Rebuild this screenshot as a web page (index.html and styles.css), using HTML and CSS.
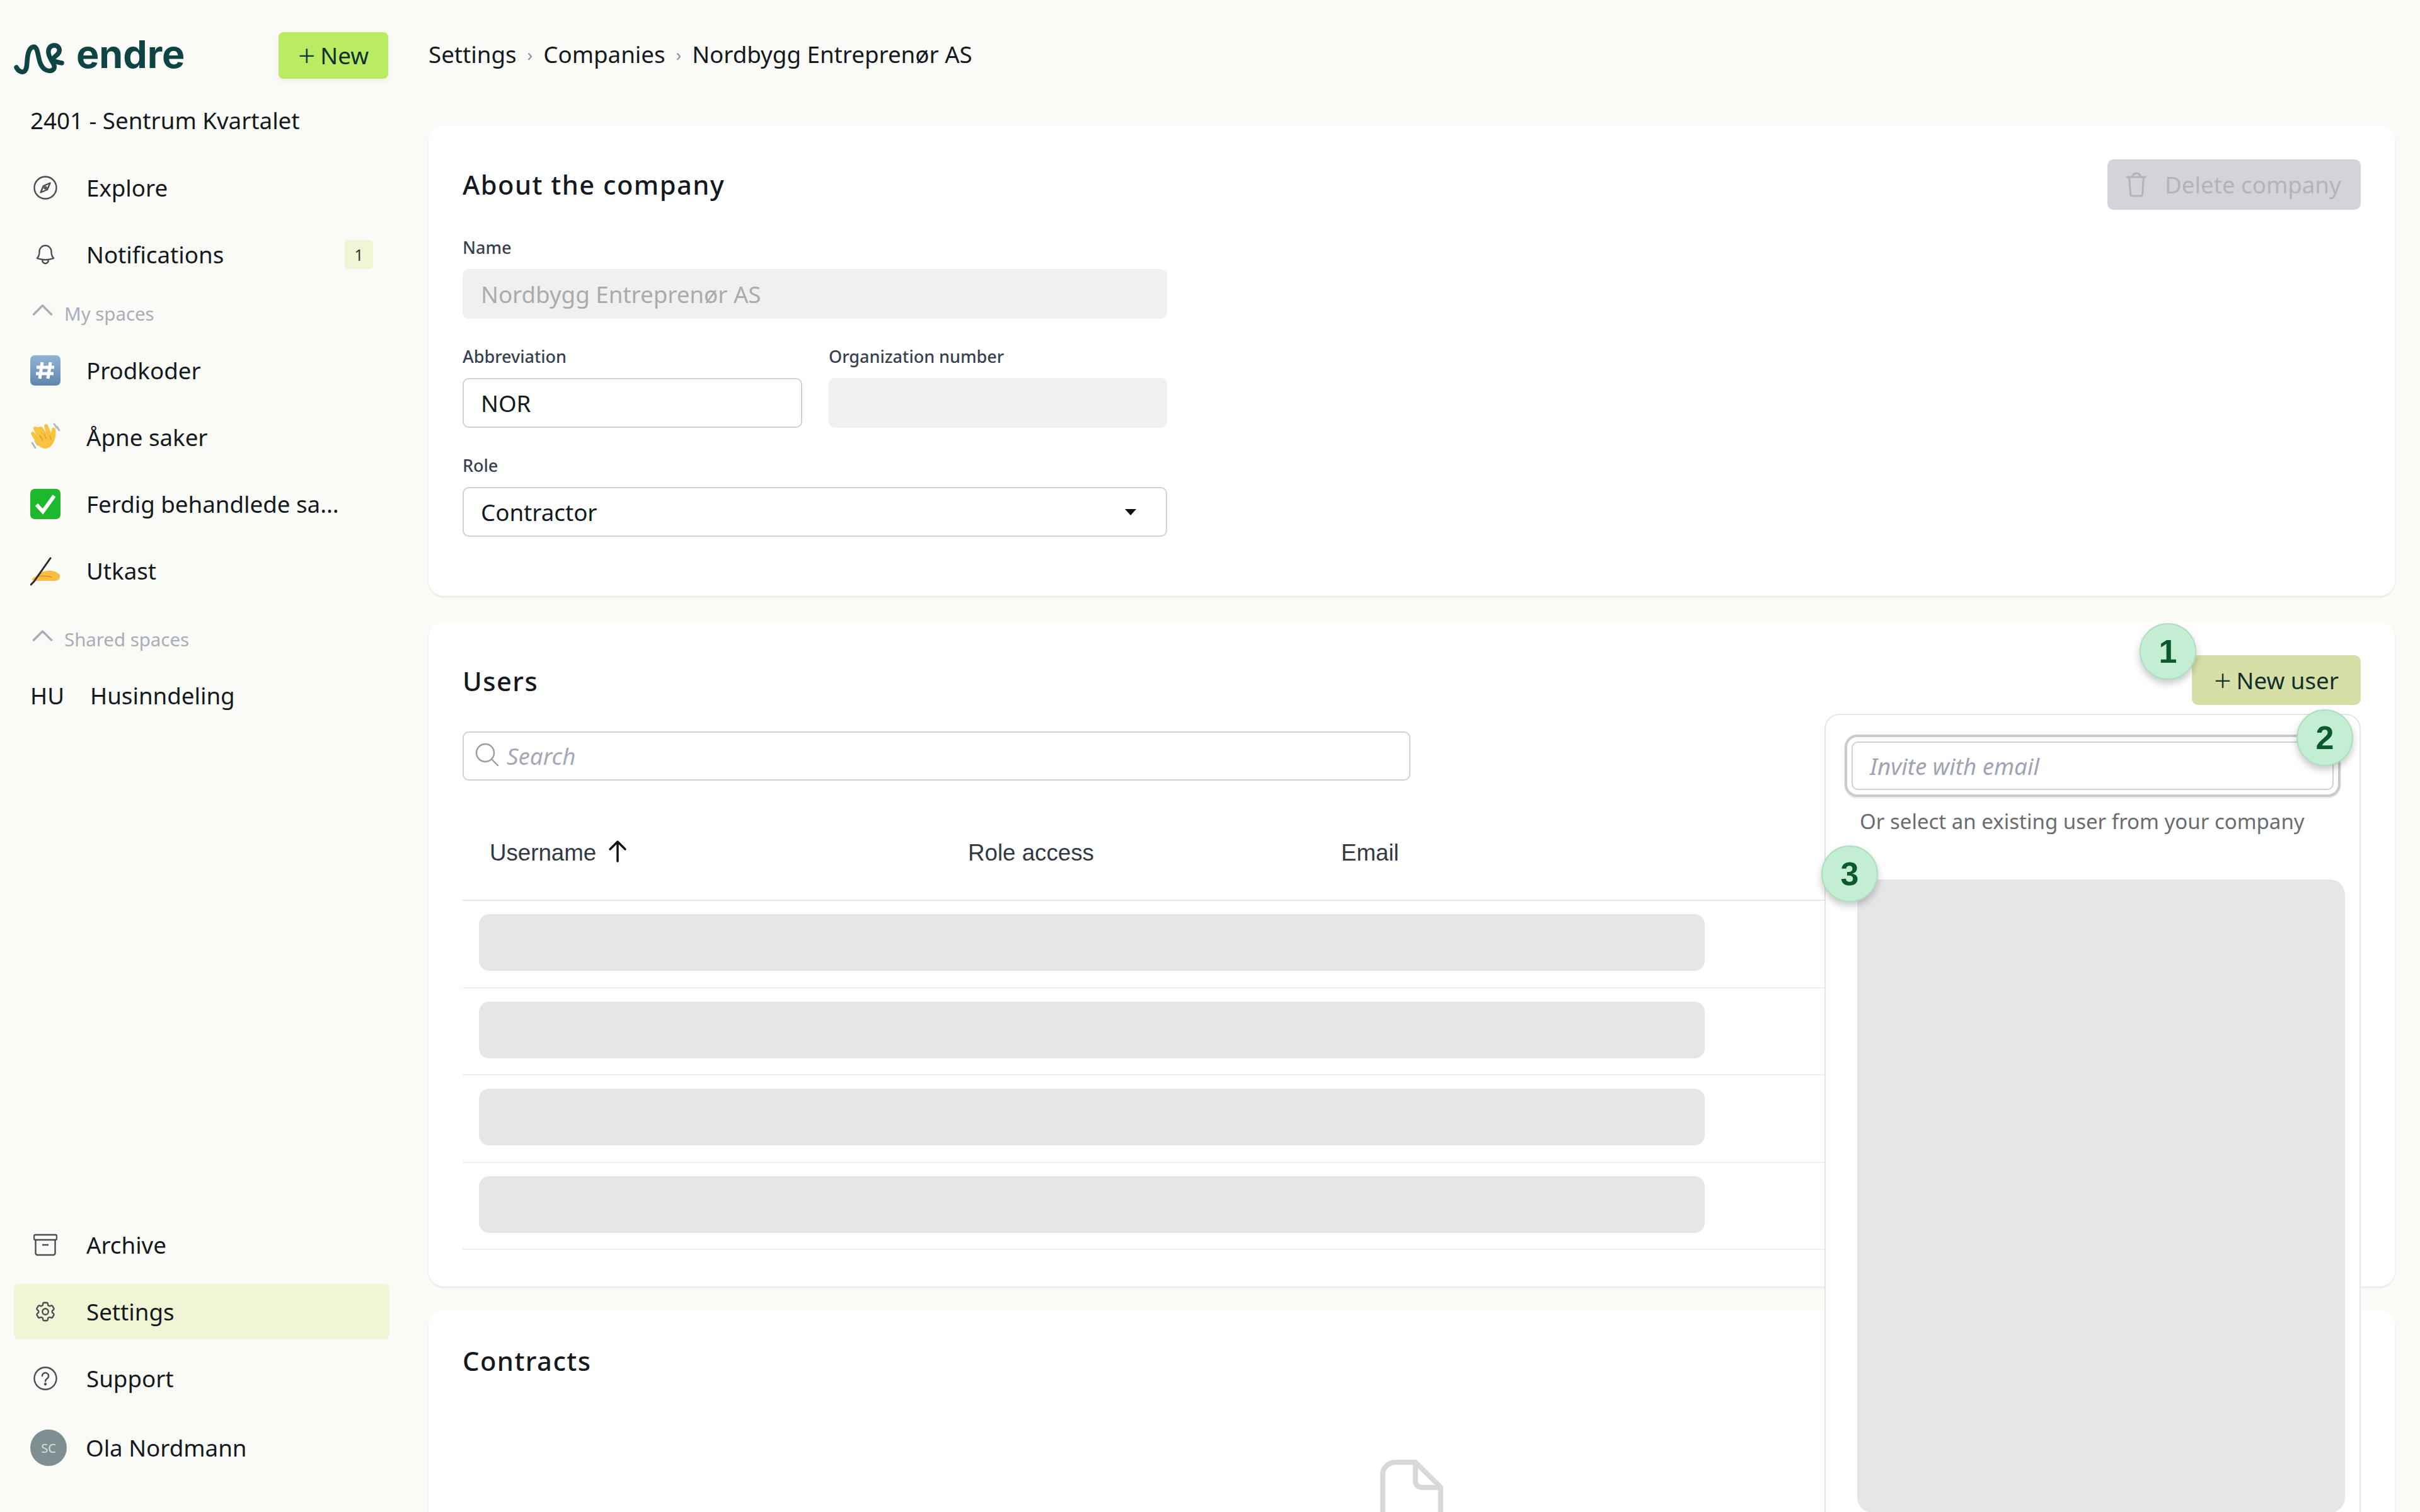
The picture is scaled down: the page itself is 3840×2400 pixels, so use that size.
FILE: index.html
```html
<!DOCTYPE html>
<html lang="en">
<head>
<meta charset="utf-8">
<title>Nordbygg Entreprenør AS</title>
<link rel="stylesheet" href="styles.css">
</head>
<body>
<div class="app">
  <aside class="sidebar">
    <div class="brand-row">
      <div class="brand">
        <svg class="logo" viewBox="0 0 80 56" fill="none" stroke="#0f4444" stroke-width="7.5" stroke-linecap="round" stroke-linejoin="round"><path d="M4 40c3 6 9 9 13 6 6-5 2-20 7-32 3-7 9-9 12-3 4 9 3 25 13 32 6 4 13 3 15-2 2-6-8-14-9-24-1-7 3-12 9-12 7 0 10 6 7 12-3 5-9 7-10 11 3 3 9 4 15 5"/></svg>
        <span class="wordmark">endre</span>
      </div>
      <div class="btn-new"><span class="plus">+</span>New</div>
    </div>
    <div class="project">2401 - Sentrum Kvartalet</div>
    <nav class="nav">
      <div class="nav-item">
        <svg class="nav-icon" viewBox="0 0 38 38" fill="none" stroke="#4a4d52" stroke-width="2.4"><ellipse cx="19" cy="19" rx="17.5" ry="17.5"/><path d="M26.5 11.5 22 22l-10.500 4.500L16 16z" stroke-linejoin="round"/><circle cx="19" cy="19" r="1.500"/></svg>
        <span>Explore</span>
      </div>
      <div class="nav-item">
        <svg class="nav-icon" viewBox="0 0 24 24" fill="none" stroke="#4a4d52" stroke-width="1.500" stroke-linecap="round" stroke-linejoin="round"><path d="M14.857 17.082a23.848 23.848 0 0 0 5.454-1.31A8.967 8.967 0 0 1 18 9.75V9A6 6 0 0 0 6 9v.75a8.967 8.967 0 0 1-2.312 6.022c1.733.64 3.56 1.085 5.455 1.31m5.714 0a24.255 24.255 0 0 1-5.714 0m5.714 0a3 3 0 1 1-5.714 0"/></svg>
        <span>Notifications</span>
        <span class="count">1</span>
      </div>
    </nav>
    <div class="section-head section-my">
      <svg class="chev" viewBox="0 0 32 20" fill="none" stroke="#a9adbb" stroke-width="3.500" stroke-linecap="round" stroke-linejoin="round"><path d="M2 17 16 3l14 14"/></svg>
      <span>My spaces</span>
    </div>
    <div class="nav">
      <div class="nav-item">
        <svg class="emoji" viewBox="0 0 48 48"><defs><linearGradient id="kc" x1="0" y1="0" x2="0" y2="1"><stop offset="0" stop-color="#8fb3d4"/><stop offset="1" stop-color="#5f86ad"/></linearGradient></defs><rect width="48" height="48" rx="7" fill="url(#kc)"/><path d="M19 11l-4 26M32 11l-4 26M10 19h28M9 29h28" stroke="#fff" stroke-width="5" fill="none"/></svg>
        <span>Prodkoder</span>
      </div>
      <div class="nav-item">
        <svg class="emoji" viewBox="0 0 48 48"><path d="M3 33l5 8M8 30l4 6M38 3l4 6M43 8l3 5" stroke="#b9b9b9" stroke-width="3" fill="none" stroke-linecap="round"/><path d="M14 8c2-2 4-1 6 1l5 8-3-11c0-3 4-4 6-1l5 12 1-6c1-3 5-3 6 0 1 7 0 15-3 21-4 8-11 12-18 9-5-2-9-7-12-12l-5-9c-2-3 1-6 4-4l5 6-6-11c-1-3 3-5 5-3z" fill="#f8c43f"/><path d="M22 19l4 8M15 21l5 8M31 21l2 7" stroke="#e59a22" stroke-width="1.500" fill="none"/></svg>
        <span>Åpne saker</span>
      </div>
      <div class="nav-item">
        <svg class="emoji" viewBox="0 0 48 48"><rect width="48" height="48" rx="7" fill="#1eb82c"/><path d="M10 25l10 11 18-25" stroke="#fff" stroke-width="6" fill="none"/></svg>
        <span>Ferdig behandlede sa...</span>
      </div>
      <div class="nav-item">
        <svg class="emoji" viewBox="0 0 48 48"><path d="M12 30c6-5 14-7 22-6 5 1 11 3 13 7 1 5-2 9-8 9H8c-3 0-6-1-5-3 2-3 6-4 9-7z" fill="#f8bd45"/><path d="M14 33c6-1 14-1 20 1" stroke="#d98f22" stroke-width="1.500" fill="none"/><path d="M1 46l5-5M6 41 32 4" stroke="#2a2a2a" stroke-width="3" fill="none" stroke-linecap="round"/></svg>
        <span>Utkast</span>
      </div>
    </div>
    <div class="section-head section-shared">
      <svg class="chev" viewBox="0 0 32 20" fill="none" stroke="#a9adbb" stroke-width="3.500" stroke-linecap="round" stroke-linejoin="round"><path d="M2 17 16 3l14 14"/></svg>
      <span>Shared spaces</span>
    </div>
    <div class="nav">
      <div class="nav-item nav-abbr"><span class="abbr">HU</span><span>Husinndeling</span></div>
    </div>
    <div class="nav nav-bottom">
      <div class="nav-item">
        <svg class="nav-icon" viewBox="0 0 38 38" fill="none" stroke="#4a4d52" stroke-width="2.400" stroke-linejoin="round"><rect x="1" y="3" width="36" height="8" rx="2"/><path d="M3.500 11v21a3 3 0 0 0 3 3h25a3 3 0 0 0 3-3V11M14 19h10"/></svg>
        <span>Archive</span>
      </div>
      <div class="nav-item active">
        <svg class="nav-icon" viewBox="0 0 24 24" fill="none" stroke="#4a4d52" stroke-width="1.500" stroke-linecap="round" stroke-linejoin="round"><path d="M9.594 3.94c.09-.542.56-.94 1.11-.94h2.593c.55 0 1.02.398 1.11.94l.213 1.281c.063.374.313.686.645.87.074.04.147.083.22.127.325.196.72.257 1.075.124l1.217-.456a1.125 1.125 0 0 1 1.37.49l1.296 2.247a1.125 1.125 0 0 1-.26 1.431l-1.003.827c-.293.241-.438.613-.43.992a7.723 7.723 0 0 1 0 .255c-.008.378.137.75.43.991l1.004.827c.424.35.534.955.26 1.43l-1.298 2.247a1.125 1.125 0 0 1-1.369.491l-1.217-.456c-.355-.133-.75-.072-1.076.124a6.47 6.47 0 0 1-.22.128c-.331.183-.581.495-.644.869l-.213 1.281c-.09.543-.56.94-1.11.94h-2.594c-.55 0-1.019-.398-1.11-.94l-.213-1.281c-.062-.374-.312-.686-.644-.87a6.52 6.52 0 0 1-.22-.127c-.325-.196-.72-.257-1.076-.124l-1.217.456a1.125 1.125 0 0 1-1.369-.49l-1.297-2.247a1.125 1.125 0 0 1 .26-1.431l1.004-.827c.292-.24.437-.613.43-.991a6.932 6.932 0 0 1 0-.255c.007-.38-.138-.751-.43-.992l-1.004-.827a1.125 1.125 0 0 1-.26-1.43l1.297-2.247a1.125 1.125 0 0 1 1.37-.491l1.216.456c.356.133.751.072 1.076-.124.072-.044.146-.086.22-.128.332-.183.582-.495.644-.869l.214-1.28Z"/><circle cx="12" cy="12" r="3"/></svg>
        <span>Settings</span>
      </div>
      <div class="nav-item">
        <svg class="nav-icon" viewBox="0 0 38 38" fill="none" stroke="#4a4d52" stroke-width="2.400" stroke-linecap="round"><circle cx="19" cy="19" r="17.500"/><path d="M14 15a5 5 0 1 1 8 4c-2 1.500-3 2.500-3 4.500"/><circle cx="19" cy="28" r="1" fill="#4a4d52"/></svg>
        <span>Support</span>
      </div>
      <div class="nav-item nav-user">
        <span class="avatar">SC</span>
        <span>Ola Nordmann</span>
      </div>
    </div>
  </aside>

  <main class="main">
    <div class="crumbs">
      <span>Settings</span><span class="sep">›</span><span>Companies</span><span class="sep">›</span><span>Nordbygg Entreprenør AS</span>
    </div>

    <section class="card card-about">
      <div class="card-head">
        <h2 class="card-title">About the company</h2>
        <div class="btn-delete">
          <svg class="trash" viewBox="0 0 32 40" fill="none" stroke="#b2b4b9" stroke-width="3" stroke-linejoin="round" stroke-linecap="round"><path d="M1.500 8h29M10 8c0-4 2-6 6-6s6 2 6 6M4.500 8l2 27a3 3 0 0 0 3 3h13a3 3 0 0 0 3-3l2-27"/></svg>
          <span>Delete company</span>
        </div>
      </div>
      <div class="field-row row-full">
        <div class="field field-wide">
          <div class="label">Name</div>
          <div class="input disabled">Nordbygg Entreprenør AS</div>
        </div>
      </div>
      <div class="field-row">
        <div class="field field-abbr">
          <div class="label">Abbreviation</div>
          <div class="input">NOR</div>
        </div>
        <div class="field field-org">
          <div class="label">Organization number</div>
          <div class="input disabled"></div>
        </div>
      </div>
      <div class="field-row">
        <div class="field field-wide">
          <div class="label">Role</div>
          <div class="input select"><span>Contractor</span><span class="caret"></span></div>
        </div>
      </div>
    </section>

    <section class="card card-users">
      <div class="users-head">
        <h2 class="card-title">Users</h2>
        <div class="btn-user"><span class="plus">+</span>New user</div>
      </div>
      <div class="search">
        <svg class="search-icon" viewBox="0 0 38 38" fill="none" stroke="#9a9da6" stroke-width="2.400" stroke-linecap="round"><circle cx="16" cy="16" r="14"/><path d="M26 26l10 10"/></svg>
        <span>Search</span>
      </div>
      <div class="thead">
        <div class="th th-user">Username<svg class="sort" viewBox="0 0 32 36" fill="none" stroke="#111" stroke-width="3.500" stroke-linecap="round" stroke-linejoin="round"><path d="M16 34V3M4 15 16 3l12 12"/></svg></div>
        <div class="th th-role">Role access</div>
        <div class="th">Email</div>
      </div>
      <div class="row"><div class="skeleton"></div></div>
      <div class="row"><div class="skeleton"></div></div>
      <div class="row"><div class="skeleton"></div></div>
      <div class="row"><div class="skeleton"></div></div>

      <div class="popover">
        <div class="invite-ring"><div class="invite-input">Invite with email</div></div>
        <p class="invite-hint">Or select an existing user from your company</p>
        <div class="user-list"></div>
      </div>
      <span class="marker marker-1">1</span>
      <span class="marker marker-2">2</span>
      <span class="marker marker-3">3</span>
    </section>

    <section class="card card-contracts">
      <h2 class="card-title">Contracts</h2>
      <svg class="doc" viewBox="0 0 100 140" fill="none" stroke="#d6d8dc" stroke-width="8" stroke-linejoin="round"><path d="M4 24a20 20 0 0 1 20-20h32l40 40v92H4zM56 4v30a10 10 0 0 0 10 10h30"/></svg>
    </section>
  </main>
</div>
</body>
</html>
```
FILE: styles.css
```css
* { box-sizing: border-box; }
html, body { margin: 0; height: 2400px; overflow: hidden; }
body {
  background: #fafbf6;
  color: #14181f;
  font-family: "Noto Sans", "Open Sans", sans-serif;
  font-size: 36.7px;
}
.app { display: flex; height: 2400px; }

/* Sidebar */
.sidebar {
  width: 680px;
  flex: none;
  display: flex;
  flex-direction: column;
  height: 2400px;
  padding: 51px 62px 58px 22px;
}
.brand-row { display: flex; align-items: center; justify-content: space-between; height: 74px; }
.brand { display: flex; align-items: center; gap: 19px; }
.logo { width: 80px; height: 56px; margin-top: 14px; }
.wordmark {
  font-family: Inter, "Noto Sans", sans-serif;
  font-weight: 700;
  font-size: 61px;
  line-height: 74px;
  color: #0f4444;
  letter-spacing: 0;
  margin-top: -4px;
}
.btn-new {
  width: 174px;
  height: 74px;
  margin-right: 2px;
  border-radius: 8px;
  background: #b9ec62;
  box-shadow: 0 3px 8px rgba(60, 80, 20, .08);
  display: flex;
  align-items: center;
  justify-content: center;
  color: #12302c;
}
.plus { font-size: 48px; line-height: 48px; margin-right: 8px; font-weight: 300; }
.project { height: 66px; margin-top: 33px; padding-left: 26px; line-height: 66px; }
.nav { display: flex; flex-direction: column; gap: 18px; }
.project + .nav { margin-top: 30px; }
.nav-item {
  height: 88px;
  display: flex;
  align-items: center;
  padding-left: 31px;
  border-radius: 8px;
}
.nav-item > span:first-of-type { white-space: nowrap; }
.nav-icon { width: 38px; height: 38px; margin-right: 46px; flex: none; }
.emoji { width: 48px; height: 48px; margin-left: -5px; margin-right: 41px; flex: none; }
.count {
  margin-left: auto;
  margin-right: 26px;
  width: 45px;
  height: 46px;
  border-radius: 6px;
  background: #eff5d5;
  font-size: 24.500px;
  display: flex;
  align-items: center;
  justify-content: center;
  color: #333;
}
.section-head {
  display: flex;
  align-items: center;
  gap: 18px;
  padding-left: 29px;
  color: #a9adbb;
  font-size: 29.400px;
  height: 40px;
}
.chev { width: 33px; height: 20px; margin-top: -12px; }
.section-my { margin-top: 30px; margin-bottom: 26px; }
.section-shared { margin-top: 45px; margin-bottom: 25px; }
.abbr { width: 95px; font-size: 36.700px; }
.nav-abbr { padding-left: 26px; }
.nav-bottom { margin-top: auto; }
.nav-item.active { background: #eff5d5; }
.nav-user { margin-top: 4px; padding-left: 26px; }
.avatar {
  width: 58px;
  height: 58px;
  border-radius: 50%;
  background: #7d8f90;
  color: #d9dedf;
  font-size: 20px;
  display: flex;
  align-items: center;
  justify-content: center;
  margin-right: 30px;
  flex: none;
}

/* Main */
.main { flex: 1; min-width: 0; padding-right: 40px; }
.crumbs {
  height: 172px;
  margin-bottom: 28px;
  display: flex;
  align-items: center;
  white-space: nowrap;
}
.sep { color: #8d9199; font-size: 28px; margin: 0 17px; }
.card {
  background: #fff;
  border-radius: 24px;
  box-shadow: 0 2px 3px rgba(90, 95, 70, .12);
  padding: 0 54px;
  position: relative;
}
.card-title { margin: 0; font-size: 41.600px; font-weight: 500; letter-spacing: 1.500px; line-height: 56px; }
.card-about { height: 746px; padding-top: 53px; }
.card-head { display: flex; align-items: center; justify-content: space-between; height: 80px; }
.btn-delete {
  width: 402px;
  height: 80px;
  border-radius: 10px;
  background: #d2d4d8;
  color: #b2b4b9;
  display: flex;
  align-items: center;
  padding-left: 30px;
  gap: 29px;
}
.trash { width: 32px; height: 40px; }
.field-row { display: flex; gap: 42px; margin-top: 43px; width: 1118px; }
.field-wide { width: 100%; }
.field-abbr { width: 539px; }
.field-org { width: 537px; }
.label { font-size: 27px; font-weight: 500; line-height: 34px; margin-bottom: 17px; color: #384050; white-space: nowrap; }
.input {
  height: 79px;
  border: 2px solid #d0d1d3;
  border-radius: 10px;
  padding: 0 27px;
  display: flex;
  align-items: center;
  background: #fff;
  color: #14181f;
}
.input.disabled { background: #f0f0f0; border-color: #f0f0f0; color: #a9abae; }
.select { justify-content: space-between; padding-right: 47px; }
.caret { width: 0; height: 0; border: 9px solid transparent; border-top: 10px solid #111; border-bottom: 0; }

.card-users { height: 1055px; margin-top: 41px; padding-top: 53px; }
.users-head { display: flex; align-items: center; justify-content: space-between; height: 79px; }
.users-head .card-title { margin-top: 3px; }
.btn-user {
  width: 268px;
  height: 79px;
  border-radius: 10px;
  background: #d6e0a6;
  display: flex;
  align-items: center;
  justify-content: center;
  color: #12302c;
  font-size: 36.700px;
}
.search {
  margin-top: 42px;
  width: 1504px;
  height: 78px;
  border: 2px solid #d0d1d3;
  border-radius: 10px;
  display: flex;
  align-items: center;
  padding-left: 18px;
  gap: 12px;
  color: #a5a8b5;
  font-style: italic;
}
.search-icon { width: 38px; height: 38px; margin-top: -4px; }
.thead {
  display: flex;
  align-items: center;
  height: 191px;
  padding-left: 43px;
  padding-top: 40px;
  border-bottom: 2px solid #e6e7e8;
  font-family: "Liberation Sans", Arial, sans-serif;
  font-size: 36.700px;
  color: #333845;
}
.th { white-space: nowrap; display: flex; align-items: center; }
.th-user { width: 759px; }
.th-role { width: 592px; }
.sort { width: 32px; height: 36px; margin-left: 18px; margin-top: -6px; }
.row { height: 138.500px; padding: 21px 0 0 26px; border-bottom: 2px solid #eeeeef; }
.skeleton { width: 1945px; height: 90px; border-radius: 16px; background: #e5e6e8; }

.popover {
  position: absolute;
  top: 146px;
  right: 54px;
  width: 851px;
  height: 1400px;
  background: #fff;
  border: 2px solid #e5e6e8;
  border-radius: 24px;
  padding: 31px 24px 0 30px;
  z-index: 2;
}
.invite-ring {
  width: 787px;
  height: 99px;
  border: 4px solid #c9cacc;
  border-radius: 20px;
  padding: 7px;
  box-shadow: 0 2px 3px rgba(0, 0, 0, .1);
}
.invite-input {
  height: 77px;
  border: 2px solid #d0d1d3;
  border-radius: 10px;
  display: flex;
  align-items: center;
  padding-left: 27px;
  color: #a0a3b2;
  font-style: italic;
}
.invite-hint {
  margin: 17px 0 0 24px;
  font-size: 33px;
  line-height: 44px;
  color: #6a6c70;
  white-space: nowrap;
}
.user-list {
  margin: 70px 0 0 20px;
  width: 774px;
  height: 1005px;
  background: #e5e6e8;
  border-radius: 24px;
}
.marker {
  position: absolute;
  z-index: 3;
  width: 90px;
  height: 90px;
  border-radius: 50%;
  background: #c4eed4;
  border: 2px solid #acdfc0;
  box-shadow: 0 6px 12px rgba(0, 0, 0, .22);
  color: #0b5a2e;
  font-family: "Liberation Sans", Arial, sans-serif;
  font-weight: 700;
  font-size: 52px;
  display: flex;
  align-items: center;
  justify-content: center;
}
.marker-1 { left: 2715px; top: 2px; }
.marker-2 { left: 2964px; top: 139px; }
.marker-3 { left: 2210px; top: 355px; }

.card-contracts { height: 500px; margin-top: 38px; padding-top: 52px; }
.doc { display: block; width: 100px; height: 140px; margin: 129px 0 0 1456px; }
```
